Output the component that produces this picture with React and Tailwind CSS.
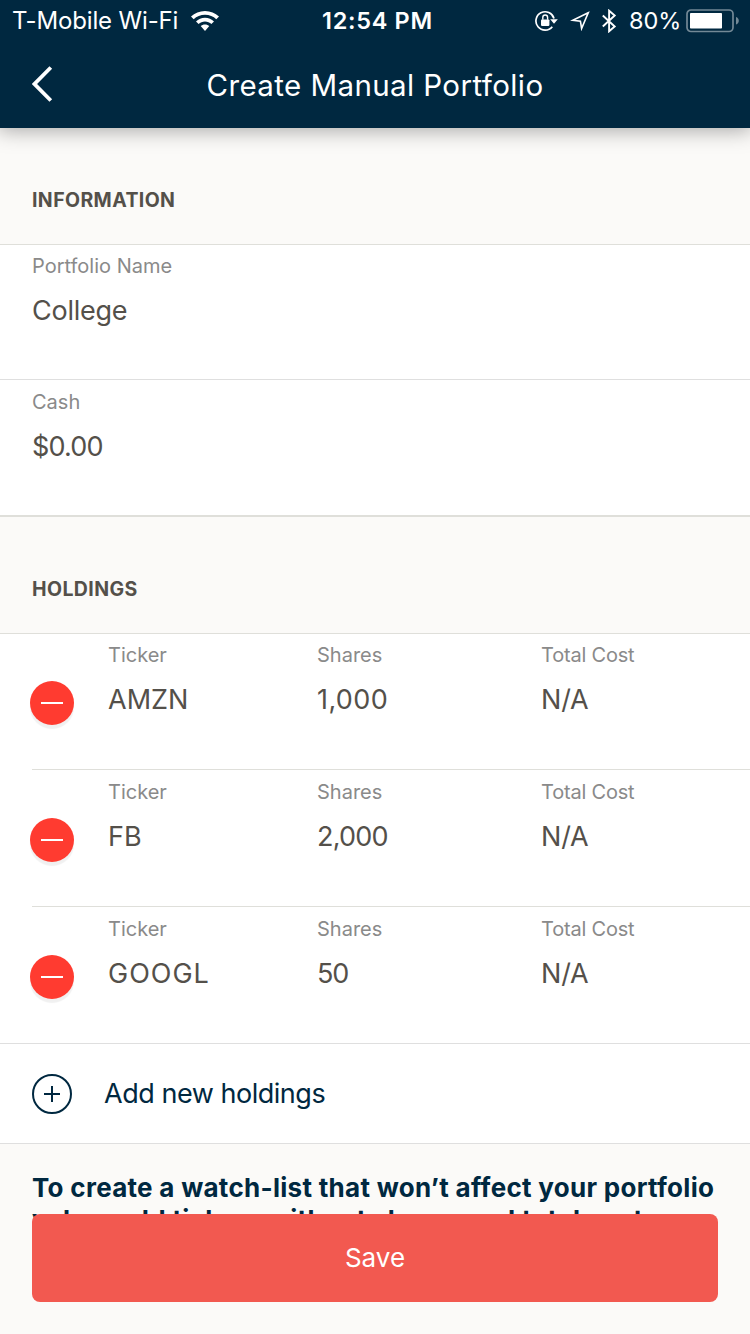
import React from 'react';

const holdings = [
  { ticker: 'AMZN', shares: '1,000', cost: 'N/A', tickerTracking: '', sharesTracking: 'tracking-[0.4px]' },
  { ticker: 'FB', shares: '2,000', cost: 'N/A', tickerTracking: '', sharesTracking: 'tracking-[-0.8px]' },
  { ticker: 'GOOGL', shares: '50', cost: 'N/A', tickerTracking: 'tracking-[1px]', sharesTracking: 'tracking-[-1.2px]' },
];

const WifiIcon = () => (
  <svg width="28" height="20" viewBox="0 0 28 20" fill="#fff">
    <path d="M14 0C8.6 0 3.7 2.1 0 5.6L2.7 8.3C5.6 5.5 9.6 3.8 14 3.8s8.4 1.7 11.3 4.5L28 5.6C24.3 2.1 19.4 0 14 0Z" />
    <path d="M14 6.8c-3.5 0-6.7 1.4-9 3.7l2.6 2.6c1.7-1.7 3.9-2.7 6.4-2.7s4.7 1 6.4 2.7l2.6-2.6c-2.3-2.3-5.5-3.7-9-3.7Z" />
    <path d="M14 13.4c-1.7 0-3.2.7-4.3 1.7L14 19.9l4.3-4.8c-1.1-1-2.6-1.7-4.3-1.7Z" />
  </svg>
);

const RotationLockIcon = () => (
  <svg width="24" height="22" viewBox="0 0 24 22" fill="none">
    <path d="M20 8.5A9.2 9.2 0 1 0 18.3 16.8" stroke="#fff" strokeWidth="1.7" />
    <path d="M16.2 9.2h7.6l-3.8 4.6Z" fill="#fff" />
    <rect x="7" y="9.5" width="8.4" height="6.4" rx="0.8" fill="#fff" />
    <path d="M8.8 9.8V7.4a2.4 2.4 0 0 1 4.8 0v2.4" stroke="#fff" strokeWidth="1.4" />
  </svg>
);

const LocationIcon = () => (
  <svg width="20" height="20" viewBox="0 0 20 20" fill="none">
    <path d="M18.2 1.8 2.8 9.2l7.6.9 1.2 7.4Z" stroke="#fff" strokeWidth="1.6" />
  </svg>
);

const BluetoothIcon = () => (
  <svg width="16" height="24" viewBox="0 0 16 24" fill="none">
    <path d="M1.8 6.5 13.7 17.5 8.1 22.3V1.7l5.6 4.8L1.8 17.5" stroke="#fff" strokeWidth="1.9" />
  </svg>
);

const BatteryIcon = () => (
  <svg width="54" height="24" viewBox="0 0 54 24" fill="none">
    <rect x="1" y="1" width="46" height="21.5" rx="4" stroke="#fff" strokeOpacity="0.45" strokeWidth="1.7" />
    <rect x="4" y="4" width="32" height="15.5" rx="0.8" fill="#fff" />
    <path d="M50 8c1.8.6 2.8 2 2.8 3.7s-1 3.2-2.8 3.8Z" fill="#fff" fillOpacity="0.45" />
  </svg>
);

const StatusBar = () => (
  <div className="grid h-10 grid-cols-[322px_212px_1fr] items-center whitespace-nowrap text-[24px] leading-[42px]">
    <div className="flex items-center pl-3">
      <span className="w-[179px] tracking-[-0.15px]">T-Mobile Wi-Fi</span>
      <WifiIcon />
    </div>
    <span className="text-[23.5px] font-semibold tracking-[0.7px]">12:54 PM</span>
    <div className="flex items-center">
      <RotationLockIcon />
      <span className="ml-3"><LocationIcon /></span>
      <span className="ml-[11px]"><BluetoothIcon /></span>
      <span className="ml-[12px] w-[57px] text-[23.5px]">80%</span>
      <BatteryIcon />
    </div>
  </div>
);

const Header = () => (
  <header className="relative z-10 h-32 bg-[#002840] text-white shadow-[0_0_20px_2px_rgba(0,0,0,0.35)]">
    <StatusBar />
    <div className="grid h-[88px] grid-cols-[120px_1fr_120px] items-center">
      <button className="pl-8">
        <svg width="22" height="36" viewBox="0 0 22 36" fill="none">
          <path d="M18.8 1.5 2.5 18l16.3 16.5" stroke="#fff" strokeWidth="3.8" />
        </svg>
      </button>
      <h1 className="whitespace-nowrap pt-[3px] text-center text-[29.5px] leading-[85px] tracking-[0.4px]">Create Manual Portfolio</h1>
    </div>
  </header>
);

const SectionTitle = ({ children }) => (
  <h2 className="h-[117px] border-b border-[#dfdfda] bg-[#fbfaf8] pl-8 pt-[58px] text-[19.5px] font-bold leading-7 tracking-[0.4px] text-[#54504a]">
    {children}
  </h2>
);

const Field = ({ label, value, className, valueClass = '' }) => (
  <div className={className}>
    <div className="whitespace-nowrap text-[20px] leading-[28px] text-[#8a8a8a]">{label}</div>
    <div className={`mt-[12px] whitespace-nowrap text-[27px] leading-[38px] text-[#54504a] ${valueClass}`}>{value}</div>
  </div>
);

const HoldingRow = ({ ticker, shares, cost, tickerTracking, sharesTracking, first, last }) => (
  <div className={last ? 'border-b border-[#dfdfdf]' : ''}>
    <div className={`ml-8 flex ${first ? 'pt-[7px]' : 'pt-2'} ${first || last ? 'h-[136px]' : 'h-[137px]'} ${last ? '' : 'border-b border-[#dfdfda]'}`}>
      <button className="-ml-0.5 mt-10 flex size-11 items-center justify-center rounded-full bg-[#ff3b30] shadow-[0_4px_1px_rgba(0,0,0,0.06)]">
        <span className="h-0.5 w-[22px] bg-white" />
      </button>
      <Field label="Ticker" value={ticker} valueClass={tickerTracking} className="ml-[34px] w-[209px]" />
      <Field label="Shares" value={shares} valueClass={sharesTracking} className="w-[224px]" />
      <Field label="Total Cost" value={cost} className="tracking-[-0.2px]" />
    </div>
  </div>
);

export default function App() {
  return (
    <div className="h-[1334px] w-[750px] overflow-hidden bg-white font-['Inter','Liberation_Sans',sans-serif]">
      <Header />
      <main>
        <SectionTitle>INFORMATION</SectionTitle>
        <Field label="Portfolio Name" value="College" valueClass="tracking-[-0.25px]" className="h-[135px] border-b border-[#dfdfdf] pl-8 pt-[7px]" />
        <Field label="Cash" value="$0.00" valueClass="tracking-[-0.8px]" className="h-[137px] border-b-2 border-[#dfdfda] pl-8 pt-2" />
        <SectionTitle>HOLDINGS</SectionTitle>
        {holdings.map((h, i) => (
          <HoldingRow key={h.ticker} {...h} first={i === 0} last={i === holdings.length - 1} />
        ))}
        <button className="flex h-[100px] w-full items-center border-b border-[#dfdfdf] pl-8 text-[#002840]">
          <svg width="40" height="40" viewBox="0 0 40 40" fill="none" stroke="#002840" strokeWidth="2">
            <circle cx="20" cy="20" r="19" />
            <path d="M20 12v16M12 20h16" />
          </svg>
          <span className="ml-8 text-[27px] leading-[38px] tracking-[-0.47px]">Add new holdings</span>
        </button>
      </main>
      <footer className="relative h-[190px] bg-[#fbfaf8] px-8 pt-[28px]">
        <p className="whitespace-nowrap text-[26px] font-bold leading-[32px] tracking-[0.29px] text-[#002840]">
          <span className="block">To create a watch-list that won’t affect your portfolio</span>
          <span className="block">value, add tickers without shares and total cost.</span>
        </p>
        <button className="absolute left-8 top-[70px] h-[88px] w-[686px] rounded-lg bg-[#f25950] pb-0.5 text-[26px] text-white">
          Save
        </button>
      </footer>
    </div>
  );
}
